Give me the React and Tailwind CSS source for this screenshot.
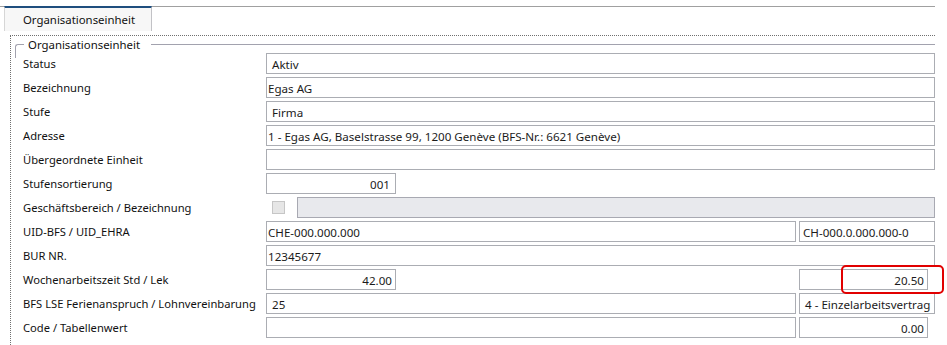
const font = { fontFamily: "'Noto Sans', Lato, sans-serif" }

function Box({ className = "", children }) {
  return (
    <div className={`h-[21px] shrink-0 flex items-center pt-[2px] border border-[#abadb3] bg-white text-[11.6px] text-[#1b1b1b] whitespace-nowrap overflow-hidden ${className}`}>
      {children}
    </div>
  )
}

function Row({ label, children }) {
  return (
    <div className="flex items-center h-[21px] pl-[12px]">
      <div className="w-[243px] shrink-0 pt-[2px] text-[11.2px] text-[#111] whitespace-nowrap">{label}</div>
      {children}
    </div>
  )
}

export default function App() {
  return (
    <div className="w-[947px] h-[345px] bg-white overflow-hidden" style={font}>
      <div className="h-[6px]" />

      {/* Tab strip */}
      <div className="flex w-[935px] h-[25px]">
        <div className="w-[4px] border-t border-[#a0a0a0]" />
        <div className="w-[148px] flex items-center justify-center bg-[#f7f7f7] border-t-2 border-t-[#1e4e7e] border-l border-l-[#d6d6d6] border-r border-r-[#c2c2c6] text-[11.4px] text-[#111] pl-[2px]">
          Organisationseinheit
        </div>
        <div className="flex-1 border-t border-[#a0a0a0]" />
      </div>

      {/* Focus area */}
      <div className="mt-[4px] ml-[10px] w-[925px] h-[320px] border-t border-l border-dotted border-[#707070]">
        {/* Group box header */}
        <div className="flex items-start h-[16px]">
          <div className="ml-[4px] mt-[8px] w-[9px] h-[14px] shrink-0 border-t border-l border-[#a2a2ae] rounded-tl-[3px]" />
          <div className="pl-[4px] pr-[11px] h-[16px] pt-[1px] flex items-center text-[11.4px] text-[#111] whitespace-nowrap">
            Organisationseinheit
          </div>
          <div className="flex-1 mt-[8px] border-t border-[#a2a2ae]" />
        </div>

        <div className="mt-[1px] flex flex-col gap-[3px]">
          <Row label="Status">
            <Box className="flex-1 pl-[5px]">Aktiv</Box>
          </Row>
          <Row label="Bezeichnung">
            <Box className="flex-1 pl-[1px]">Egas AG</Box>
          </Row>
          <Row label="Stufe">
            <Box className="flex-1 pl-[5px]">Firma</Box>
          </Row>
          <Row label="Adresse">
            <Box className="flex-1 pl-[1px]">1 - Egas AG, Baselstrasse 99, 1200 Genève (BFS-Nr.: 6621 Genève)</Box>
          </Row>
          <Row label="Übergeordnete Einheit">
            <Box className="flex-1" />
          </Row>
          <Row label="Stufensortierung">
            <Box className="w-[130px] justify-end pr-[5px]">001</Box>
          </Row>
          <Row label="Geschäftsbereich / Bezeichnung">
            <div className="ml-[6px] w-[13px] h-[13px] shrink-0 bg-[#e6e6e6] border border-[#c6c6c6]" />
            <div className="ml-[12px] flex-1 h-[21px] bg-[#e8e9ed] border border-[#a8a9b2]" />
          </Row>
          <Row label="UID-BFS / UID_EHRA">
            <Box className="w-[530px] pl-[1px]">CHE-000.000.000</Box>
            <Box className="ml-[3px] flex-1 pl-[3px]">CH-000.0.000.000-0</Box>
          </Row>
          <Row label="BUR NR.">
            <Box className="flex-1 pl-[1px]">12345677</Box>
          </Row>
          <Row label="Wochenarbeitszeit Std / Lek">
            <Box className="w-[130px] justify-end pr-[3px]">42.00</Box>
            <div className="relative ml-[403px]">
              <Box className="w-[129px] justify-end pr-[3px]">20.50</Box>
              <div className="absolute left-[42px] top-[-4px] w-[103px] h-[29px] border-2 border-[#e10000] rounded-[5px]" />
            </div>
          </Row>
          <Row label="BFS LSE Ferienanspruch / Lohnvereinbarung">
            <Box className="w-[530px] pl-[5px]">25</Box>
            <Box className="ml-[3px] flex-1 pl-[5px]">4 - Einzelarbeitsvertrag</Box>
          </Row>
          <Row label="Code / Tabellenwert">
            <Box className="w-[530px]" />
            <Box className="ml-[3px] w-[129px] justify-end pr-[3px]">0.00</Box>
            <div className="ml-[8px] self-start mt-[10px] w-px h-[19px] bg-[#9a9a9a]" />
          </Row>
        </div>
      </div>
    </div>
  )
}
